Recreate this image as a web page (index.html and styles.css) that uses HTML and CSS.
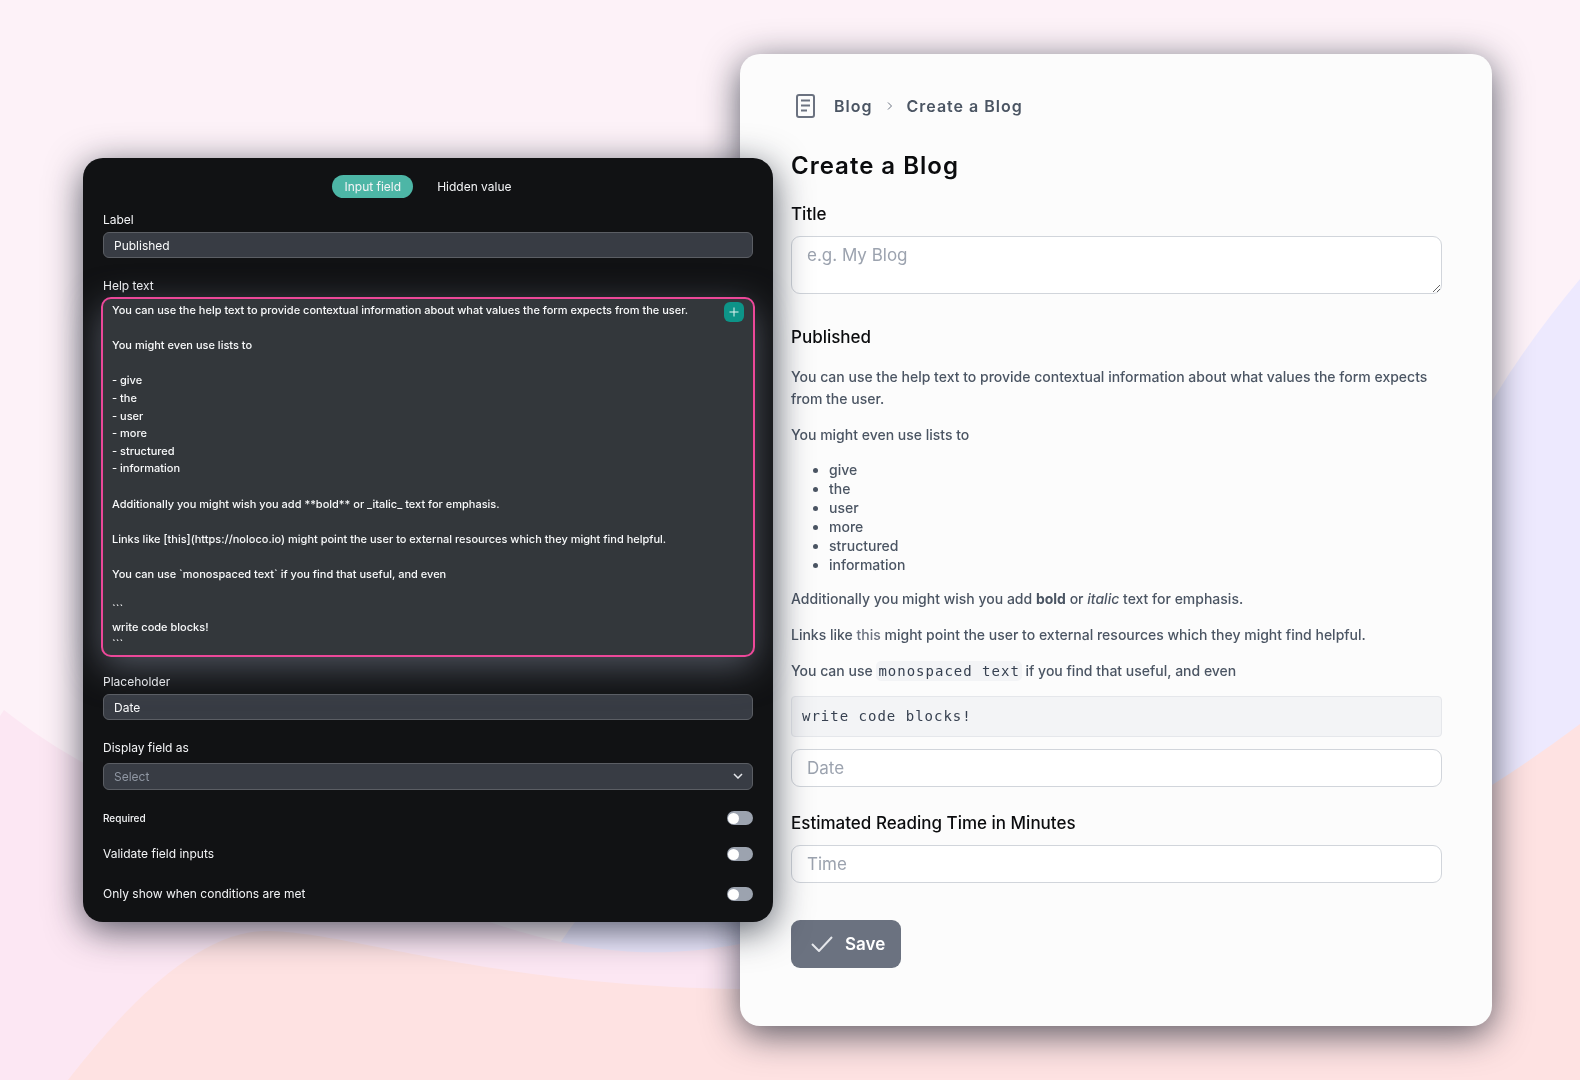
FILE: index.html
```html
<!DOCTYPE html>
<html lang="en">
  <head>
    <meta charset="UTF-8" />
    <meta name="viewport" content="width=device-width, initial-scale=1.0" />
    <title>Create a Blog</title>
    <link rel="stylesheet" href="styles.css">
  </head>
  <body>
    <svg class="backdrop" viewBox="0 0 1580 1080" preserveAspectRatio="none" aria-hidden="true">
      <path fill="#ede9fe" d="M560 943C700 740 900 640 1150 590C1300 560 1400 500 1492 401Q1529 340 1580 279V1080H560Z" />
      <path fill="#fce7f3" d="M0 716L4 710C130 810 300 850 430 900C560 952 640 962 740 944C900 915 1100 850 1300 900V1080H0Z" />
      <path fill="#fee2e2" d="M68 1080C130 1000 200 932 265 931C350 931 480 985 740 989C1050 989 1250 880 1492 785Q1536 757 1580 724V1080Z" />
    </svg>

    <main class="page">
      <section class="card editor">
        <div class="tabs">
          <button type="button" class="tab active">Input field</button>
          <button type="button" class="tab">Hidden value</button>
        </div>

        <div class="field">
          <label for="label">Label</label>
          <input type="text" id="label" value="Published" />
        </div>

        <div class="field help-field">
          <label for="help">Help text</label>
          <div class="help-box">
            <textarea id="help" spellcheck="false">You can use the help text to provide contextual information about what values the form expects from the user.

You might even use lists to

- give
- the
- user
- more
- structured
- information

Additionally you might wish you add **bold** or _italic_ text for emphasis.

Links like [this](https://noloco.io) might point the user to external resources which they might find helpful.

You can use `monospaced text` if you find that useful, and even

&#96;&#96;&#96;
write code blocks!
&#96;&#96;&#96;</textarea>
            <button type="button" class="add" aria-label="Insert value">
              <svg width="10" height="10" viewBox="0 0 10 10"><path d="M5 0.500V9.500M0.500 5H9.500" /></svg>
            </button>
          </div>
        </div>

        <div class="field">
          <label for="placeholder">Placeholder</label>
          <input type="text" id="placeholder" value="Date" />
        </div>

        <div class="field select-field">
          <label for="display">Display field as</label>
          <div class="select-box">
            <select id="display">
              <option>Select</option>
            </select>
            <svg class="caret" width="10" height="6" viewBox="0 0 10 6"><path d="M1 1L5 5L9 1" /></svg>
          </div>
        </div>

        <div class="switch-row">
          <label for="required" class="small">Required</label>
          <input type="checkbox" id="required" class="switch" />
        </div>
        <div class="switch-row">
          <label for="validate">Validate field inputs</label>
          <input type="checkbox" id="validate" class="switch" />
        </div>
        <div class="switch-row last">
          <label for="conditions">Only show when conditions are met</label>
          <input type="checkbox" id="conditions" class="switch" />
        </div>
      </section>

      <section class="card preview">
        <nav class="breadcrumb">
          <svg class="doc" width="28" height="24" viewBox="0 0 28 24">
            <rect x="6" y="1" width="17" height="22" rx="2" />
            <path d="M10 6.500H19M10 11.500H19M10 16.500H16" />
          </svg>
          <a href="#">Blog</a>
          <svg class="chevron" width="6" height="8" viewBox="0 0 6 8"><path d="M1 0.500L4.500 4L1 7.500" /></svg>
          <a href="#">Create a Blog</a>
        </nav>

        <h1>Create a Blog</h1>

        <form>
          <div class="form-field">
            <label for="title">Title</label>
            <textarea id="title" placeholder="e.g. My Blog"></textarea>
          </div>

          <div class="form-field">
            <label for="published">Published</label>
            <div class="help">
              <p>You can use the help text to provide contextual information about what values the form expects from the user.</p>
              <p>You might even use lists to</p>
              <ul>
                <li>give</li>
                <li>the</li>
                <li>user</li>
                <li>more</li>
                <li>structured</li>
                <li>information</li>
              </ul>
              <p>Additionally you might wish you add <strong>bold</strong> or <em>italic</em> text for emphasis.</p>
              <p>Links like <a href="https://noloco.io">this</a> might point the user to external resources which they might find helpful.</p>
              <p>You can use <code>monospaced text</code> if you find that useful, and even</p>
              <pre>write code blocks!</pre>
            </div>
            <input type="text" id="published" placeholder="Date" />
          </div>

          <div class="form-field">
            <label for="time">Estimated Reading Time in Minutes</label>
            <input type="text" id="time" placeholder="Time" />
          </div>

          <button type="button" class="save">
            <svg width="22" height="16" viewBox="0 0 22 16"><path d="M1 8L8 15L21 1" /></svg>
            Save
          </button>
        </form>
      </section>
    </main>
  </body>
</html>
```
FILE: styles.css
```css
* {
  box-sizing: border-box;
}
body {
  margin: 0;
  min-height: 100vh;
  background-color: #fdf2f8;
  font-family: Inter, sans-serif;
}
input,
textarea,
select,
button {
  font-family: inherit;
}
.backdrop {
  position: fixed;
  z-index: -1;
  width: 100%;
  height: 100%;
}
.page {
  display: flex;
  align-items: flex-start;
  padding: 54px 88px 54px 83px;
}
.card {
  min-width: 0;
  border-radius: 20px;
  box-shadow: 0 8px 36px rgba(17, 24, 39, 0.7);
}

/* editor panel */
.editor {
  flex: 650 1 40px;
  z-index: 1;
  margin-top: 104px;
  margin-right: -33px;
  padding: 17px 20px 20px;
  background-color: #111214;
  color: #f3f4f6;
  font-size: 12px;
  line-height: 16px;
}
.tabs {
  display: flex;
  justify-content: center;
  gap: 12px;
  margin-bottom: 14px;
}
.tab {
  height: 23px;
  padding: 0 12px;
  border: 0;
  border-radius: 12px;
  background: none;
  color: #f3f4f6;
  font-size: 12px;
  cursor: pointer;
}
.tab.active {
  background-color: #4db6a6;
}
.field {
  display: flex;
  flex-direction: column;
  gap: 4px;
  margin-bottom: 20px;
}
.field input,
.field select {
  width: 100%;
  height: 26px;
  padding: 0 10px;
  border: 1px solid #5b5e64;
  border-radius: 6px;
  background-color: #383c44;
  color: #f9fafb;
  font-size: 12px;
}
.help-field {
  gap: 3px;
  margin-bottom: 17px;
}
.help-box {
  position: relative;
  margin: 0 -2px;
}
.help-box textarea {
  display: block;
  width: 100%;
  height: 360px;
  padding: 3px 9px;
  border: 2px solid #ec4899;
  border-radius: 10px;
  outline: 0;
  resize: none;
  overflow: hidden;
  background-color: #33373b;
  color: #f9fafb;
  font-size: 11px;
  font-weight: 500;
  line-height: 1.6;
  box-shadow: 0 10px 36px rgba(107, 114, 128, 0.7);
}
.add {
  position: absolute;
  top: 5px;
  right: 11px;
  display: flex;
  align-items: center;
  justify-content: center;
  width: 20px;
  height: 20px;
  padding: 0;
  border: 0;
  border-radius: 6px;
  background-color: #0d9488;
  cursor: pointer;
}
.add svg {
  stroke: #e5f5f3;
}
.select-field {
  gap: 7px;
}
.select-box {
  position: relative;
}
.field select {
  display: block;
  height: 27px;
  appearance: none;
  color: #9097a3;
}
.caret {
  position: absolute;
  top: 10px;
  right: 10px;
  fill: none;
  stroke: #e5e7eb;
  stroke-width: 1.5;
  pointer-events: none;
}
.switch-row {
  display: flex;
  align-items: center;
  justify-content: space-between;
  margin-top: 20px;
}
.switch-row.last {
  margin-top: 24px;
}
.small {
  font-size: 10px;
  font-weight: 500;
}
.switch {
  appearance: none;
  display: flex;
  align-items: center;
  width: 26px;
  height: 14px;
  margin: 0;
  padding: 0 1px;
  border-radius: 7px;
  background-color: #9ca3af;
  cursor: pointer;
}
.switch::before {
  content: "";
  width: 11px;
  height: 11px;
  border-radius: 50%;
  background-color: #fff;
}
.switch:checked {
  justify-content: flex-end;
  background-color: #0d9488;
}

/* form preview */
.preview {
  flex: 651 1 101px;
  padding: 40px 50px 58px 51px;
  background-color: #fcfcfc;
  color: #0b0c0e;
}
.breadcrumb {
  display: flex;
  align-items: center;
}
.breadcrumb a {
  color: #4b5563;
  font-size: 16px;
  font-weight: 600;
  line-height: 24px;
  letter-spacing: 1px;
  text-decoration: none;
}
.doc {
  margin-right: 15px;
  fill: none;
  stroke: #6b7280;
  stroke-width: 2;
}
.chevron {
  margin: 0 13px 0 15px;
  fill: none;
  stroke: #6b7280;
}
h1 {
  margin: 32px 0 20px;
  font-size: 24px;
  font-weight: 600;
  line-height: 32px;
  letter-spacing: 1px;
}
.form-field {
  display: flex;
  flex-direction: column;
  margin-bottom: 24px;
}
.form-field:first-child {
  margin-bottom: 31px;
}
.form-field > label {
  margin-bottom: 10px;
  font-size: 17px;
  font-weight: 500;
  line-height: 24px;
}
.form-field > input,
.form-field > textarea {
  width: 100%;
  height: 38px;
  padding: 0 15px;
  border: 1px solid #d1d5db;
  border-radius: 9px;
  background-color: #fff;
  font-size: 17px;
}
.form-field > textarea {
  height: 58px;
  padding: 6px 15px;
  line-height: 24px;
}
::placeholder {
  color: #9ca3af;
}
.help {
  margin: 7px 0 12px;
  color: #4b5563;
  font-size: 14px;
  font-weight: 500;
  line-height: 22px;
}
.help p {
  margin: 0 0 14px;
}
.help ul {
  margin: 0 0 14px;
  padding-left: 38px;
  line-height: 19px;
}
.help a {
  color: #6b7280;
  text-decoration: none;
}
.help strong {
  font-weight: 700;
}
code,
pre {
  font-family: "DejaVu Sans Mono", monospace;
  font-size: 14px;
  font-weight: 400;
  letter-spacing: 1px;
}
code {
  padding: 2px;
  border-radius: 5px;
  background-color: #f3f4f6;
  color: #374151;
}
pre {
  margin: 0;
  padding: 9px 10px;
  border: 1px solid #e5e7eb;
  border-radius: 4px;
  background-color: #f3f4f6;
  color: #374151;
  line-height: 21px;
}
.save {
  display: flex;
  align-items: center;
  gap: 12px;
  height: 48px;
  margin-top: 37px;
  padding: 0 16px 0 20px;
  border: 0;
  border-radius: 9px;
  background-color: #6b7280;
  color: #fff;
  font-size: 17px;
  font-weight: 600;
  cursor: pointer;
}
.save svg {
  fill: none;
  stroke: #e5e7eb;
  stroke-width: 2;
}
```
